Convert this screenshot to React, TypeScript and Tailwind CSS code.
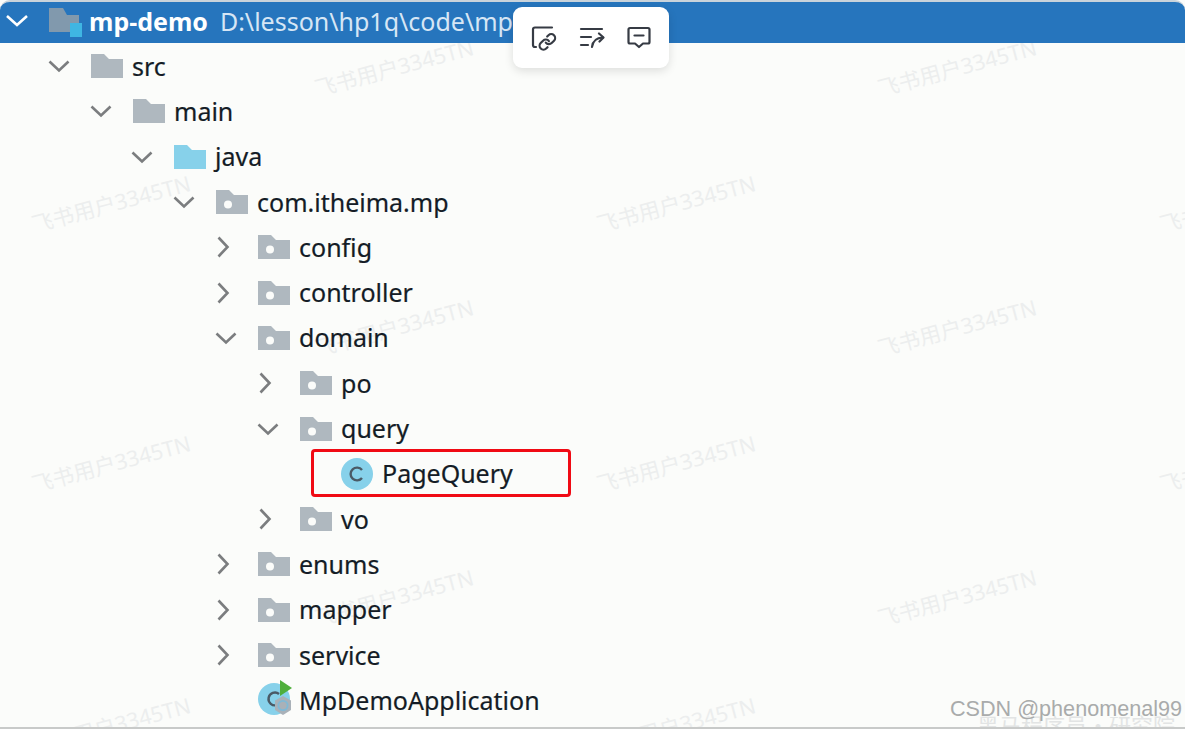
const PAD = ["pl-[47px]","pl-[89px]","pl-[130px]","pl-[172px]","pl-[214px]","pl-[256px]","pl-[299px]"];

function Chevron({ open }: { open: boolean }) {
  return (
    <svg width="24" height="24" viewBox="0 0 24 24" fill="none" stroke="#7b7d7f" strokeWidth="2.6" className="shrink-0">
      {open ? <path d="M2.5 7.5 L12 16.5 L21.5 7.5" /> : <path d="M4.5 2.5 L13.5 12 L4.5 21.5" />}
    </svg>
  );
}

function Folder({ color = "#afb8bf", dot = false }: { color?: string; dot?: boolean }) {
  return (
    <svg width="32" height="24" viewBox="0 0 32 24" className="shrink-0">
      <path d="M0 0 H13 L18 5 H32 V24 H0 Z" fill={color} />
      {dot && <circle cx="12" cy="14.5" r="4" fill="#fbfcfa" />}
    </svg>
  );
}

function ClassIcon() {
  return (
    <svg width="32" height="32" viewBox="0 0 32 32" className="shrink-0">
      <circle cx="16" cy="16" r="16" fill="#87d1ea" />
      <path d="M21 12 A6.4 6.4 0 1 0 21 20" fill="none" stroke="#4a5a66" strokeWidth="2.4" />
    </svg>
  );
}

function AppIcon() {
  return (
    <svg width="38" height="38" viewBox="0 0 38 38" className="shrink-0">
      <circle cx="16" cy="20" r="16" fill="#87d1ea" />
      <path d="M21 15 A6.4 6.4 0 1 0 19 26" fill="none" stroke="#4a5a66" strokeWidth="2.4" />
      <path d="M22 1 L34 9 L22 17 Z" fill="#4faf3c" />
      <path d="M25 17 L33 21.5 V31 L25 36 L17 31 V21.5 Z" fill="#a9b1b8" />
      <circle cx="25" cy="26.5" r="4.6" fill="none" stroke="#7fb9d6" strokeWidth="1.8" />
    </svg>
  );
}

type Node = { name: string; depth: number; open?: boolean; kind: "plain" | "source" | "package" | "class" | "app" };

const rows: Node[] = [
  { name: "src", depth: 0, open: true, kind: "plain" },
  { name: "main", depth: 1, open: true, kind: "plain" },
  { name: "java", depth: 2, open: true, kind: "source" },
  { name: "com.itheima.mp", depth: 3, open: true, kind: "package" },
  { name: "config", depth: 4, open: false, kind: "package" },
  { name: "controller", depth: 4, open: false, kind: "package" },
  { name: "domain", depth: 4, open: true, kind: "package" },
  { name: "po", depth: 5, open: false, kind: "package" },
  { name: "query", depth: 5, open: true, kind: "package" },
  { name: "PageQuery", depth: 6, kind: "class" },
  { name: "vo", depth: 5, open: false, kind: "package" },
  { name: "enums", depth: 4, open: false, kind: "package" },
  { name: "mapper", depth: 4, open: false, kind: "package" },
  { name: "service", depth: 4, open: false, kind: "package" },
  { name: "MpDemoApplication", depth: 4, kind: "app" },
];

function Row({ node }: { node: Node }) {
  return (
    <div className={`flex h-[45.3px] items-center ${PAD[node.depth]}`}>
      {node.open !== undefined ? (
        <span className="flex w-[44px] shrink-0 items-center"><Chevron open={node.open} /></span>
      ) : node.kind === "class" ? (
        <span className="w-[42px] shrink-0" />
      ) : (
        <span className="w-[44px] shrink-0" />
      )}
      {node.kind === "plain" && <Folder />}
      {node.kind === "source" && <Folder color="#87d1ea" />}
      {node.kind === "package" && <Folder dot />}
      {node.kind === "class" && <ClassIcon />}
      {node.kind === "app" && <span className="-mt-1 w-[32px] shrink-0"><AppIcon /></span>}
      <span className="ml-[9px] text-[25px] leading-none text-[#141c26] [-webkit-text-stroke:0.2px_#141c26]">{node.name}</span>
    </div>
  );
}

const marks: [number, number][] = [
  [315, 78], [878, 78], [32, 214], [597, 214], [1160, 214], [315, 338], [878, 338],
  [32, 474], [597, 474], [1160, 474], [315, 608], [878, 608], [32, 736], [597, 736],
];

export default function App() {
  return (
    <div className="relative h-[729px] w-[1185px] overflow-hidden bg-[#fbfcfa] font-['Noto_Sans',sans-serif]">
      {marks.map(([x, y]) => (
        <span
          key={`${x}-${y}`}
          className="pointer-events-none absolute origin-left -rotate-[15deg] whitespace-nowrap text-[21.5px] leading-none text-[#eceeee] font-['Noto_Sans','Noto_Sans_CJK_SC',sans-serif]"
          style={{ left: x, top: y }}
        >
          飞书用户3345TN
        </span>
      ))}
      <span className="absolute bottom-[-6px] right-[10px] whitespace-nowrap text-[22px] leading-none text-[#e2e4e4] font-['Noto_Sans_CJK_SC',sans-serif]">
        黑马程序员·研究院
      </span>

      <header className="relative flex h-[43px] items-center rounded-t-[10px] border-t-2 border-[#c9d3db] bg-[#2675bd] pl-[6px]">
        <svg width="22" height="22" viewBox="0 0 22 22" fill="none" stroke="#ffffff" strokeWidth="2.6" className="-mt-1 shrink-0">
          <path d="M1 6 L11 15 L21 6" />
        </svg>
        <svg width="34" height="30" viewBox="0 0 34 30" className="ml-[21px] shrink-0">
          <path d="M0 0 H14 L18 7 H30 V24 H0 Z" fill="#8199ad" />
          <rect x="21" y="15" width="12" height="14" fill="#3fb6e3" />
        </svg>
        <span className="-mt-[2px] ml-[6px] text-[25px] font-bold text-white">mp-demo</span>
        <span className="-mt-[2px] ml-[12px] whitespace-nowrap text-[25px] text-[#d6e6f5]">D:\lesson\hp1q\code\mp-demo</span>
      </header>
      <main className="relative pt-[0.5px]">
        {rows.map((r) => <Row key={r.name} node={r} />)}
      </main>
      <div className="pointer-events-none absolute left-[311px] top-[449px] h-[48px] w-[260px] rounded-[4px] border-[3px] border-[#f00a14]" />
      <div className="absolute bottom-0 left-0 h-[2px] w-full bg-[#c8cac9]" />

      <div className="absolute left-[513px] top-[7px] flex h-[61px] w-[156px] items-center justify-between rounded-[9px] bg-white px-[18px] shadow-[0_3px_10px_rgba(0,0,0,0.12)]">
        <svg width="26" height="26" viewBox="0 0 26 26" fill="none" stroke="#363b44" strokeWidth="2.2" strokeLinecap="round" strokeLinejoin="round">
          <path d="M21 2.5 H4 Q2 2.5 2 4.5 V20 Q2 22 4 22 H5" />
          <g transform="translate(7 7.5) scale(0.78)" strokeWidth="2.8">
            <path d="M10 13a5 5 0 0 0 7.54.54l3-3a5 5 0 0 0-7.07-7.07l-1.72 1.71" />
            <path d="M14 11a5 5 0 0 0-7.54-.54l-3 3a5 5 0 0 0 7.07 7.07l1.71-1.71" />
          </g>
        </svg>
        <svg width="26" height="24" viewBox="0 0 26 24" fill="none" stroke="#363b44" strokeWidth="2.2" strokeLinecap="round" strokeLinejoin="round">
          <path d="M2 3 H23" />
          <path d="M2 11 H12" />
          <path d="M2 19 H9" />
          <path d="M13 21 Q14 12 24 11.5" />
          <path d="M20 7.5 L24.5 11.5 L20.5 15.5" />
        </svg>
        <svg width="24" height="24" viewBox="0 0 24 24" fill="none" stroke="#363b44" strokeWidth="2.2" strokeLinecap="round" strokeLinejoin="round">
          <path d="M3 2 H21 Q22.5 2 22.5 3.5 V16 Q22.5 17.5 21 17.5 H16 L12 21 L8 17.5 H3 Q1.5 17.5 1.5 16 V3.5 Q1.5 2 3 2 Z" />
          <path d="M7.5 9.5 H16.5" />
        </svg>
      </div>

      <span className="absolute bottom-[9px] right-[3px] whitespace-nowrap font-['Liberation_Sans',sans-serif] text-[21.6px] leading-none text-[#a9abab]">
        CSDN @phenomenal99
      </span>
    </div>
  );
}
